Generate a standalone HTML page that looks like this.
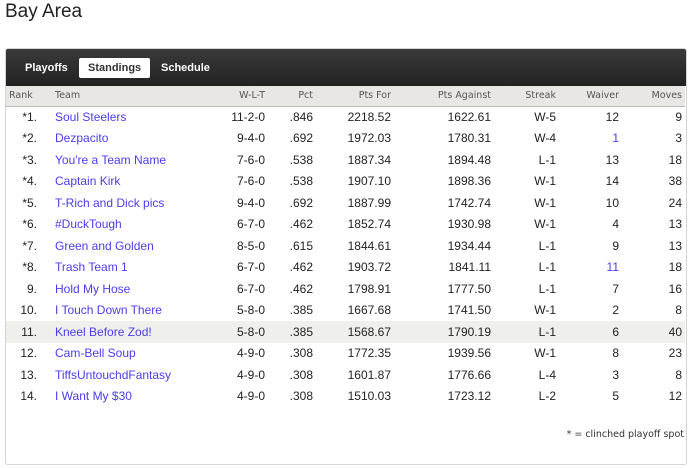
<!DOCTYPE html>
<html><head><meta charset="utf-8"><style>
*{margin:0;padding:0;box-sizing:border-box}
body{width:689px;height:468px;background:#fff;font-family:"Liberation Sans",Arial,sans-serif;position:relative;overflow:hidden}
h1{position:absolute;left:5px;top:1px;font-weight:normal;font-size:19px;color:#222}
.panel{position:absolute;left:5px;top:48px;width:682px;height:417px;border:1px solid #d4d4d4;border-radius:3px;background:#fff}
.bar{height:37px;background:linear-gradient(#3a3a3a,#222);border-radius:2px 2px 0 0;position:relative}
.tab{position:absolute;top:9px;height:20px;line-height:20px;font-size:11px;font-weight:bold;color:#fff;padding:0 9px}
.tab.on{background:#fff;color:#333;border-radius:2px}
table{border-collapse:collapse;width:679px;table-layout:fixed;font-size:12px;color:#222;white-space:nowrap}
th{font-family:"DejaVu Sans",Verdana,sans-serif;font-weight:normal;font-size:9.5px;color:#555;height:20px;background:#e9e7e3;border-bottom:1px solid #bbb;text-align:right;padding:0}
td{height:21.5px;text-align:right;padding:0}
td.t,th.t{text-align:left;padding-left:18px}
td:last-child,th:last-child{padding-right:3px}
a{color:#4b3cf0;text-decoration:none}
tr.hl td{background:#efefeb}
.note{position:absolute;right:2px;top:380px;font-family:"DejaVu Sans",Verdana,sans-serif;font-size:9.5px;color:#333}
</style></head><body>
<h1>Bay Area</h1>
<div class="panel">
<div class="bar"><span class="tab" style="left:10px">Playoffs</span><span class="tab on" style="left:73px">Standings</span><span class="tab" style="left:146px">Schedule</span></div>
<table>
<colgroup><col style="width:31px"><col style="width:193px"><col style="width:35px"><col style="width:48px"><col style="width:78px"><col style="width:100px"><col style="width:65px"><col style="width:63px"><col style="width:66px"></colgroup>
<tr><th style="text-align:left;padding-left:3px">Rank</th><th class="t">Team</th><th>W-L-T</th><th>Pct</th><th>Pts For</th><th>Pts Against</th><th>Streak</th><th>Waiver</th><th>Moves</th></tr>
<tr><td>*1.</td><td class="t"><a>Soul Steelers</a></td><td>11-2-0</td><td>.846</td><td>2218.52</td><td>1622.61</td><td>W-5</td><td>12</td><td>9</td></tr>
<tr><td>*2.</td><td class="t"><a>Dezpacito</a></td><td>9-4-0</td><td>.692</td><td>1972.03</td><td>1780.31</td><td>W-4</td><td><a>1</a></td><td>3</td></tr>
<tr><td>*3.</td><td class="t"><a>You're a Team Name</a></td><td>7-6-0</td><td>.538</td><td>1887.34</td><td>1894.48</td><td>L-1</td><td>13</td><td>18</td></tr>
<tr><td>*4.</td><td class="t"><a>Captain Kirk</a></td><td>7-6-0</td><td>.538</td><td>1907.10</td><td>1898.36</td><td>W-1</td><td>14</td><td>38</td></tr>
<tr><td>*5.</td><td class="t"><a>T-Rich and Dick pics</a></td><td>9-4-0</td><td>.692</td><td>1887.99</td><td>1742.74</td><td>W-1</td><td>10</td><td>24</td></tr>
<tr><td>*6.</td><td class="t"><a>#DuckTough</a></td><td>6-7-0</td><td>.462</td><td>1852.74</td><td>1930.98</td><td>W-1</td><td>4</td><td>13</td></tr>
<tr><td>*7.</td><td class="t"><a>Green and Golden</a></td><td>8-5-0</td><td>.615</td><td>1844.61</td><td>1934.44</td><td>L-1</td><td>9</td><td>13</td></tr>
<tr><td>*8.</td><td class="t"><a>Trash Team 1</a></td><td>6-7-0</td><td>.462</td><td>1903.72</td><td>1841.11</td><td>L-1</td><td><a>11</a></td><td>18</td></tr>
<tr><td>9.</td><td class="t"><a>Hold My Hose</a></td><td>6-7-0</td><td>.462</td><td>1798.91</td><td>1777.50</td><td>L-1</td><td>7</td><td>16</td></tr>
<tr><td>10.</td><td class="t"><a>I Touch Down There</a></td><td>5-8-0</td><td>.385</td><td>1667.68</td><td>1741.50</td><td>W-1</td><td>2</td><td>8</td></tr>
<tr class="hl"><td>11.</td><td class="t"><a>Kneel Before Zod!</a></td><td>5-8-0</td><td>.385</td><td>1568.67</td><td>1790.19</td><td>L-1</td><td>6</td><td>40</td></tr>
<tr><td>12.</td><td class="t"><a>Cam-Bell Soup</a></td><td>4-9-0</td><td>.308</td><td>1772.35</td><td>1939.56</td><td>W-1</td><td>8</td><td>23</td></tr>
<tr><td>13.</td><td class="t"><a>TiffsUntouchdFantasy</a></td><td>4-9-0</td><td>.308</td><td>1601.87</td><td>1776.66</td><td>L-4</td><td>3</td><td>8</td></tr>
<tr><td>14.</td><td class="t"><a>I Want My $30</a></td><td>4-9-0</td><td>.308</td><td>1510.03</td><td>1723.12</td><td>L-2</td><td>5</td><td>12</td></tr>
</table>
<div class="note">* = clinched playoff spot</div>
</div>
</body></html>
